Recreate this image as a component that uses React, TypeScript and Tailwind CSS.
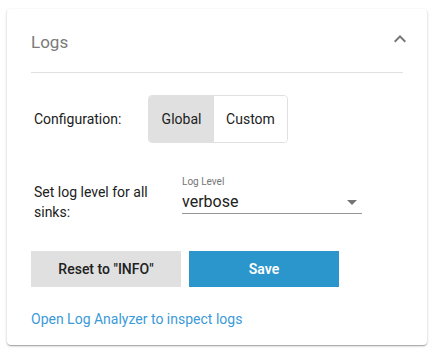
const App = () => {
  return (
    <div className="min-h-[351px] bg-white pl-[7px] pt-[9px] font-['Roboto',sans-serif]">
      <div className="w-[420px] rounded bg-white shadow-[0_1px_3px_rgba(0,0,0,0.2),0_1px_1px_rgba(0,0,0,0.14),0_2px_1px_-1px_rgba(0,0,0,0.12)]">
        <div className="mx-6 flex items-start justify-between border-b border-[#e0e0e0] pt-[21px] pb-[18px]">
          <h2 className="text-[17px] leading-6 text-[#7a7a7a]">Logs</h2>
          <svg width="24" height="24" viewBox="0 0 24 24" className="mr-[-9px] mt-[-3px] fill-[#757575]">
            <path d="M12 8l-6 6 1.41 1.41L12 10.83l4.59 4.58L18 14z" />
          </svg>
        </div>

        <div className="px-6 pt-[22px] pb-4">
          <div className="flex items-center pl-[3px]">
            <span className="w-[114px] text-sm text-[#212121]">Configuration:</span>
            <div className="flex h-12 overflow-hidden rounded border border-[#e0e0e0] text-sm text-[#212121]">
              <button className="w-[65px] bg-[#e0e0e0]">Global</button>
              <button className="w-[73px] bg-white">Custom</button>
            </div>
          </div>

          <div className="mt-[30px] flex items-start pl-[3px]">
            <span className="mt-[9px] w-[120px] text-sm leading-5 text-[#212121]">
              Set log level for all sinks:
            </span>
            <div className="ml-[28px] mt-[3px] w-[180px]">
              <div className="text-[10px] leading-3 text-[#757575]">Log Level</div>
              <div className="flex h-[26px] items-center justify-between border-b border-[#949494]">
                <span className="mt-[2px] text-base text-[#212121]">verbose</span>
                <svg width="24" height="24" viewBox="0 0 24 24" className="mr-[-2px] mt-[2px] fill-[#757575]">
                  <path d="M7 10l5 5 5-5z" />
                </svg>
              </div>
            </div>
          </div>

          <div className="mt-[29px] flex gap-2">
            <button className="h-9 w-[150px] bg-[#e0e0e0] text-sm font-medium text-[#212121]">
              Reset to "INFO"
            </button>
            <button className="h-9 w-[150px] bg-[#2a96cc] text-sm font-semibold text-white">
              Save
            </button>
          </div>

          <a className="mt-[22px] block text-sm leading-5 text-[#3b9ad8]">
            Open Log Analyzer to inspect logs
          </a>
        </div>
      </div>
    </div>
  );
};

export default App;
